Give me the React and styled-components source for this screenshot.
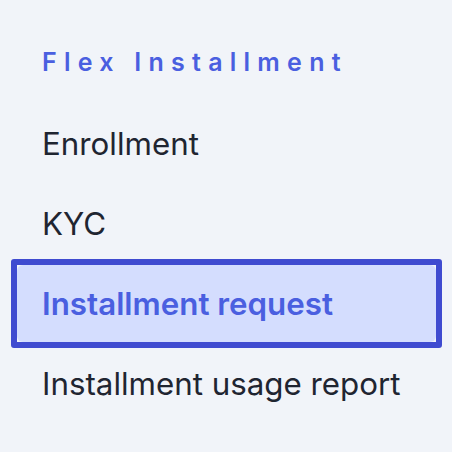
import React from "react";
import styled, { createGlobalStyle } from "styled-components";

const Global = createGlobalStyle`
  html, body { margin: 0; padding: 0; background: #f1f4f9; }
  body { font-family: Inter, "Noto Sans", sans-serif; }
`;

const Nav = styled.nav`
  display: flex;
  flex-direction: column;
  padding: 47px 16px 0 17px;
  width: 452px;
  height: 452px;
  box-sizing: border-box;
`;

const Heading = styled.h2`
  margin: 0 0 28px 25px;
  font-size: 25px;
  font-weight: 600;
  letter-spacing: 0.29em;
  color: #4a5fe0;
  line-height: normal;
`;

const List = styled.ul`
  list-style: none;
  margin: 0;
  padding: 0;
  display: flex;
  flex-direction: column;
  gap: 3px;
`;

const Item = styled.li`
  position: relative;
  height: 77px;
  display: flex;
  align-items: center;
  padding-left: 25px;
  border-radius: 6px;
  font-size: 31.3px;
  font-weight: ${(p) => (p.$active ? 600 : 400)};
  color: ${(p) => (p.$active ? "#4a5fe0" : "#1f2531")};
  background: ${(p) => (p.$active ? "#d4ddfe" : "transparent")};

  ${(p) =>
    p.$active &&
    `
    &::after {
      content: "";
      position: absolute;
      inset: -6px;
      border: 6px solid #3f4bd0;
      border-radius: 3px;
      pointer-events: none;
    }
  `}
`;

const items = ["Enrollment", "KYC", "Installment request", "Installment usage report"];

export default function App() {
  return (
    <>
      <Global />
      <Nav>
        <Heading>Flex Installment</Heading>
        <List>
          {items.map((t) => (
            <Item key={t} $active={t === "Installment request"}>
              {t}
            </Item>
          ))}
        </List>
      </Nav>
    </>
  );
}
